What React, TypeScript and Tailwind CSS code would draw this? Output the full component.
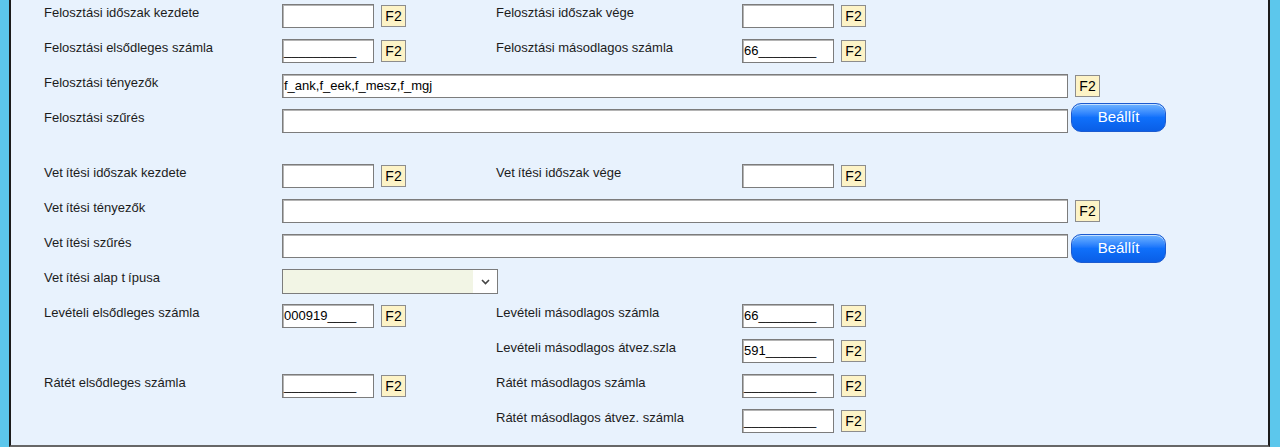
import React from "react"

const font = { fontFamily: '"Liberation Sans", Arial, sans-serif' }

function Label({ children, className = "" }: { children: React.ReactNode; className?: string }) {
  return (
    <div className={"pt-[1px] text-[13px] leading-[16px] text-[#1c1c1c] whitespace-nowrap " + className}>
      {children}
    </div>
  )
}

// "Vetítési" shows a gap between t and í on the original form
function Vt({ pre, post }: { pre: string; post: string }) {
  return (
    <>
      {pre}
      <span className="ml-[3px]">{post}</span>
    </>
  )
}

function Field({ value = "", wide = false }: { value?: string; wide?: boolean }) {
  return (
    <div
      className={
        "h-[24px] shrink-0 bg-white border border-[#7c7c7c] shadow-[inset_1px_1px_0_#b4b4b4] pl-[1px] pt-[3px] text-[13px] leading-[16px] text-black whitespace-nowrap overflow-hidden " +
        (wide ? "w-[786px]" : "w-[92px]")
      }
    >
      {value}
    </div>
  )
}

function F2() {
  return (
    <div className="ml-[7px] mt-[1px] h-[22px] w-[25px] shrink-0 flex items-center justify-center bg-[#fdf3c6] border border-[#8d8d8d] text-[14px] text-black">
      F2
    </div>
  )
}

function Beallit({ className = "" }: { className?: string }) {
  return (
    <div
      className={
        "ml-[3px] h-[29px] w-[95px] shrink-0 rounded-[10px] border border-[#1c5bd0] bg-gradient-to-b from-[#6fb4ff] via-[#0f70fb] to-[#0a5ee6] shadow-[inset_0_1px_0_rgba(255,255,255,0.6)] flex items-center justify-center text-white text-[15px] " +
        className
      }
    >
      Beállít
    </div>
  )
}

function Pair({ label, value }: { label: React.ReactNode; value?: string }) {
  return (
    <>
      <Label className="w-[238px] shrink-0">{label}</Label>
      <Field value={value} />
      <F2 />
    </>
  )
}

function RightPair({ label, value }: { label: React.ReactNode; value?: string }) {
  return (
    <>
      <Label className="w-[246px] shrink-0">{label}</Label>
      <Field value={value} />
      <F2 />
    </>
  )
}

function Row({ children }: { children: React.ReactNode }) {
  return <div className="flex items-start h-[35px]">{children}</div>
}

export default function App() {
  return (
    <div className="w-[1280px] h-[447px] flex bg-[#5cc7ec] overflow-hidden" style={font}>
      <div className="w-[9px] shrink-0" />
      <div className="flex-1 h-[447px] box-border border-l-2 border-r-2 border-b-2 border-l-[#1b1b1b] border-r-[#1b1b1b] border-b-[#676767] bg-[#e8f2fd] pt-[4px] pl-[33px]">
        <Row>
          <Pair label="Felosztási időszak kezdete" />
          <div className="w-[90px] shrink-0" />
          <RightPair label="Felosztási időszak vége" />
        </Row>
        <Row>
          <Pair label="Felosztási elsődleges számla" value="__________" />
          <div className="w-[90px] shrink-0" />
          <RightPair label="Felosztási másodlagos számla" value="66________" />
        </Row>
        <Row>
          <Label className="w-[238px] shrink-0">Felosztási tényezők</Label>
          <Field wide value="f_ank,f_eek,f_mesz,f_mgj" />
          <F2 />
        </Row>
        <Row>
          <Label className="w-[238px] shrink-0">Felosztási szűrés</Label>
          <Field wide />
          <Beallit className="mt-[-6px]" />
        </Row>

        <div className="h-[20px]" />

        <Row>
          <Pair label={<Vt pre="Vet" post="ítési időszak kezdete" />} />
          <div className="w-[90px] shrink-0" />
          <RightPair label={<Vt pre="Vet" post="ítési időszak vége" />} />
        </Row>
        <Row>
          <Label className="w-[238px] shrink-0"><Vt pre="Vet" post="ítési tényezők" /></Label>
          <Field wide />
          <F2 />
        </Row>
        <Row>
          <Label className="w-[238px] shrink-0"><Vt pre="Vet" post="ítési szűrés" /></Label>
          <Field wide />
          <Beallit />
        </Row>
        <Row>
          <Label className="w-[238px] shrink-0">
            <Vt pre="Vet" post="ítési alap " />
            <Vt pre="t" post="ípusa" />
          </Label>
          <div className="h-[25px] w-[216px] shrink-0 flex bg-white border border-[#7c7c7c]">
            <div className="flex-1 bg-[#f2f5e5]" />
            <div className="w-[24px] flex items-center justify-center">
              <svg width="9" height="6" viewBox="0 0 9 6">
                <polyline points="1,1 4.5,4.5 8,1" fill="none" stroke="#444" strokeWidth="1.6" />
              </svg>
            </div>
          </div>
        </Row>
        <Row>
          <Pair label="Levételi elsődleges számla" value="000919____" />
          <div className="w-[90px] shrink-0" />
          <RightPair label="Levételi másodlagos számla" value="66________" />
        </Row>
        <Row>
          <div className="w-[452px] shrink-0" />
          <RightPair label="Levételi másodlagos átvez.szla" value="591_______" />
        </Row>
        <Row>
          <Pair label="Rátét elsődleges számla" value="__________" />
          <div className="w-[90px] shrink-0" />
          <RightPair label="Rátét másodlagos számla" value="__________" />
        </Row>
        <Row>
          <div className="w-[452px] shrink-0" />
          <RightPair label="Rátét másodlagos átvez. számla" value="__________" />
        </Row>
      </div>
      <div className="w-[10px] shrink-0" />
    </div>
  )
}
